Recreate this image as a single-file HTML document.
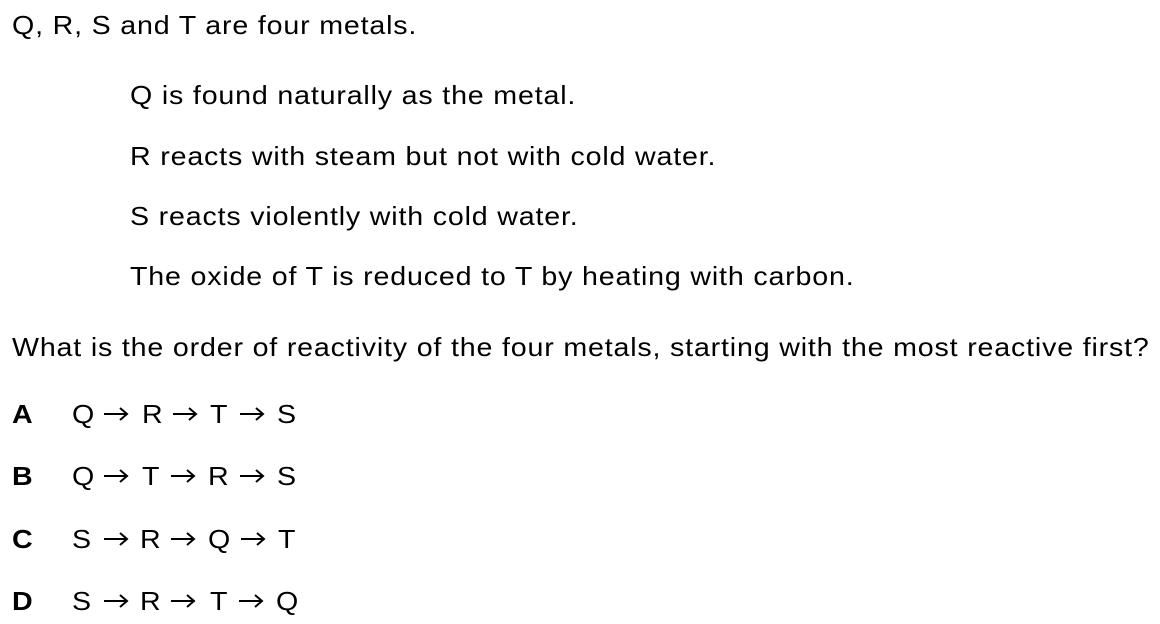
<html><head><style>
body{margin:0;width:1160px;height:624px;background:#fff;font-family:"Liberation Sans",Arial,sans-serif;font-size:26px;letter-spacing:0.75px;color:#000;position:relative;overflow:hidden}
.t{position:absolute;white-space:nowrap;line-height:1;transform:scaleX(1.1);transform-origin:0 0}
.b{font-weight:bold}
svg{position:absolute}
</style></head><body>
<div class="t" style="left:12px;top:12px">Q, R, S and T are four metals.</div>
<div class="t" style="left:130px;top:82px">Q is found naturally as the metal.</div>
<div class="t" style="left:130px;top:143px">R reacts with steam but not with cold water.</div>
<div class="t" style="left:130px;top:203px">S reacts violently with cold water.</div>
<div class="t" style="left:130px;top:263px">The oxide of T is reduced to T by heating with carbon.</div>
<div class="t" style="left:12px;top:334px">What is the order of reactivity of the four metals, starting with the most reactive first?</div>

<div class="t b" style="left:12px;top:401px">A</div>
<div class="t b" style="left:12px;top:463px">B</div>
<div class="t b" style="left:12px;top:526px">C</div>
<div class="t b" style="left:12px;top:588px">D</div>

<div class="t" style="left:72px;top:401px">Q</div><div class="t" style="left:142px;top:401px">R</div><div class="t" style="left:210px;top:401px">T</div><div class="t" style="left:277px;top:401px">S</div>
<div class="t" style="left:72px;top:463px">Q</div><div class="t" style="left:142px;top:463px">T</div><div class="t" style="left:208px;top:463px">R</div><div class="t" style="left:277px;top:463px">S</div>
<div class="t" style="left:72px;top:526px">S</div><div class="t" style="left:140px;top:526px">R</div><div class="t" style="left:208px;top:526px">Q</div><div class="t" style="left:278px;top:526px">T</div>
<div class="t" style="left:72px;top:588px">S</div><div class="t" style="left:140px;top:588px">R</div><div class="t" style="left:210px;top:588px">T</div><div class="t" style="left:276px;top:588px">Q</div>

<svg width="1160" height="624" style="left:0;top:0" fill="none" stroke="#000" stroke-width="2">
<defs><path id="a" d="M0 0H23M16 -6L23 0L16 6"/></defs>
<use href="#a" x="104" y="414"/><use href="#a" x="173" y="414"/><use href="#a" x="240" y="414"/>
<use href="#a" x="104" y="476"/><use href="#a" x="171" y="476"/><use href="#a" x="240" y="476"/>
<use href="#a" x="104" y="539"/><use href="#a" x="171" y="539"/><use href="#a" x="241" y="539"/>
<use href="#a" x="104" y="601"/><use href="#a" x="171" y="601"/><use href="#a" x="239" y="601"/>
</svg>
</body></html>
